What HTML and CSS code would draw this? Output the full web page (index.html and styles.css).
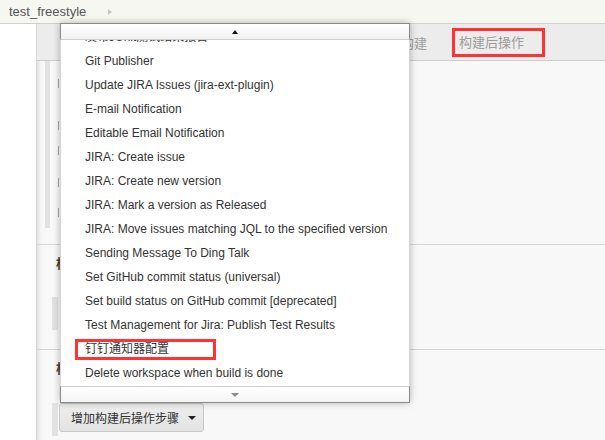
FILE: index.html
```html
<!DOCTYPE html>
<html lang="zh">
<head>
<meta charset="utf-8">
<title>test_freestyle</title>
<link rel="stylesheet" href="styles.css">
</head>
<body>
<div class="crumbs"><span class="crumb">test_freestyle</span><span class="crumb-arrow"></span></div>
<div class="page">
  <div class="side"></div>
  <div class="main">
    <div class="tabbar">
      <span class="tab">构建</span>
      <span class="tab tab-marked">构建后操作</span>
    </div>
    <div class="section s1">
      <div class="strip strip1"></div>
      <div class="marks">
        <span class="mark m1"></span>
        <span class="mark m2"></span>
        <span class="mark m3"></span>
        <span class="mark m4"></span>
        <span class="mark m5"></span>
      </div>
    </div>
    <div class="section s2">
      <div class="sec-head">构建后操作</div>
      <div class="strip strip2"></div>
    </div>
    <div class="section s3">
      <div class="sec-head">构建后操作</div>
      <div class="action-row">
        <div class="strip strip3"></div>
        <button class="add-btn">增加构建后操作步骤<span class="caret"></span></button>
      </div>
    </div>
  </div>
</div>

<div class="dd">
  <div class="dd-top"><span class="up"></span></div>
  <div class="dd-list">
    <ul>
      <li>发布JUnit测试结果报告</li>
      <li>Git Publisher</li>
      <li>Update JIRA Issues (jira-ext-plugin)</li>
      <li>E-mail Notification</li>
      <li>Editable Email Notification</li>
      <li>JIRA: Create issue</li>
      <li>JIRA: Create new version</li>
      <li>JIRA: Mark a version as Released</li>
      <li>JIRA: Move issues matching JQL to the specified version</li>
      <li>Sending Message To Ding Talk</li>
      <li>Set GitHub commit status (universal)</li>
      <li>Set build status on GitHub commit [deprecated]</li>
      <li>Test Management for Jira: Publish Test Results</li>
      <li class="marked-row"><span class="marked">钉钉通知器配置</span></li>
      <li>Delete workspace when build is done</li>
    </ul>
  </div>
  <div class="dd-bottom"><span class="down"></span></div>
</div>
</body>
</html>
```

FILE: styles.css
```css
* { box-sizing: border-box; margin: 0; padding: 0; }
html, body { width: 605px; height: 440px; overflow: hidden; }
body {
  font-family: "Liberation Sans", "Noto Sans CJK SC", Arial, sans-serif;
  color: #333;
  background: #fff;
  position: relative;
}

.crumbs {
  height: 24px;
  background: #f6f7f1;
  border-bottom: 1px solid #cfcfcf;
  display: flex;
  align-items: center;
  padding-left: 9px;
  font-size: 13px;
  color: #555;
}
.crumb-arrow {
  width: 0; height: 0;
  border-left: 4px solid #c6c6c6;
  border-top: 3.5px solid transparent;
  border-bottom: 3.5px solid transparent;
  margin-left: 22px;
}

.page { display: flex; height: 416px; }
.side { width: 37px; flex: none; background: #fff; border-right: 1px solid #d9d9d9; }
.main {
  flex: 1;
  background: #f8f8f8;
  box-shadow: inset 5px 0 5px -4px rgba(0,0,0,.14);
  display: flex;
  flex-direction: column;
}

.tabbar {
  height: 37px;
  flex: none;
  background: #ececec;
  border-bottom: 1px solid #cdcdcd;
  display: flex;
  align-items: center;
  padding-left: 364px;
  font-size: 13px;
  color: #9c9c9c;
}
.tab-marked {
  margin-left: 25px;
  height: 29px;
  line-height: 23px;
  border: 3px solid #f33;
  padding: 0 18px 0 4px;
}

.section { border-bottom: 1px solid #d6d6d6; flex: none; }
.s1 { height: 184px; display: flex; padding-left: 8px; }
.s2 { height: 105px; padding: 11px 0 0 15px; }
.s3 { flex: 1; border-bottom: 0; padding: 11px 0 0 15px; }

.strip { background: #e2e2e2; }
.strip1 { width: 5px; height: 167px; }
.strip2 { width: 6px; height: 33px; margin-top: 25px; }
.strip3 { width: 6px; height: 33px; flex: none; }

.marks { display: flex; flex-direction: column; margin-left: 8px; }
.mark { display: block; width: 1px; height: 9px; background: #a8a8a8; }
.m1 { margin-top: 18px; }
.m2 { margin-top: 33px; }
.m3 { margin-top: 16px; }
.m4 { margin-top: 23px; }
.m5 { margin-top: 21px; }

.sec-head {
  font-size: 13px;
  font-weight: bold;
  line-height: 16px;
  padding-left: 4px;
  color: #4a4030;
}

.action-row { display: flex; align-items: flex-start; margin-top: 26px; }
.add-btn {
  margin-left: 1px;
  height: 29px;
  width: 145px;
  border: 1px solid #c9c9c9;
  border-radius: 3px;
  background: linear-gradient(#eeeeee, #e3e3e3);
  font-family: "Liberation Sans", "Noto Sans CJK SC", sans-serif;
  font-size: 12px;
  color: #333;
  display: flex;
  align-items: center;
  padding: 0 0 0 11px;
}
.caret {
  width: 0; height: 0;
  border-left: 4px solid transparent;
  border-right: 4px solid transparent;
  border-top: 4px solid #222;
  margin-left: 9px;
}

/* dropdown menu overlay */
.dd {
  position: absolute;
  left: 60px;
  top: 23px;
  width: 350px;
  box-shadow: 0 0 7px rgba(0,0,0,.28);
}
.dd-top, .dd-bottom {
  height: 17px;
  display: flex;
  align-items: center;
  justify-content: center;
  border: 1px solid #8a8a8a;
}
.dd-top {
  border-bottom-color: #d0d0d0;
  background: linear-gradient(#ffffff, #f1f1f1);
}
.dd-bottom {
  border-top-color: #d0d0d0;
  background: linear-gradient(#ffffff, #f4f4f4);
}
.up {
  width: 0; height: 0;
  border-left: 3.5px solid transparent;
  border-right: 3.5px solid transparent;
  border-bottom: 4px solid #111;
}
.down {
  width: 0; height: 0;
  border-left: 4px solid transparent;
  border-right: 4px solid transparent;
  border-top: 4px solid #8c8c8c;
}
.dd-list {
  height: 346px;
  overflow: hidden;
  background: #fff;
  border-left: 1px solid #d6d6d6;
  border-right: 1px solid #d6d6d6;
}
.dd-list ul { list-style: none; margin-top: -15px; }
.dd-list li {
  height: 24px;
  line-height: 24px;
  padding-left: 24px;
  font-size: 12px;
  color: #333;
  white-space: nowrap;
}
.marked-row { display: flex; align-items: center; }
.marked {
  display: inline-block;
  height: 21px;
  line-height: 15px;
  border: 3px solid #f33;
  padding: 0 44px 0 7px;
  margin-left: -10px;
}
```
